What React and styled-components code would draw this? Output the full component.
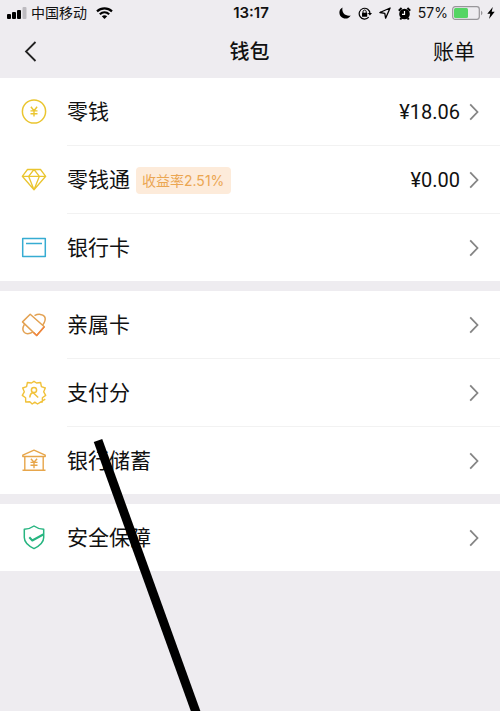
import React from 'react'
import styled, { createGlobalStyle } from 'styled-components'

const GlobalStyle = createGlobalStyle`
  * {
    box-sizing: border-box;
  }

  body {
    margin: 0;
    background: #eeecf0;
    color: #111111;
    font-family: "Liberation Sans", "Noto Sans CJK SC", sans-serif;
  }

  button {
    border: 0;
    padding: 0;
    background: none;
    color: inherit;
    font: inherit;
    cursor: pointer;
  }

  svg {
    display: block;
    flex-shrink: 0;
  }
`

const Page = styled.div`
  position: relative;
  min-height: 100vh;
  overflow: hidden;
`

const StatusBar = styled.header`
  display: grid;
  grid-template-columns: 1fr auto 1fr;
  align-items: center;
  height: 26px;
  padding: 0 5px 0 7px;
  font-size: 14px;
  line-height: 20px;
`

const StatusSide = styled.div`
  display: flex;
  align-items: center;
  justify-content: ${(props) => (props.$end ? 'flex-end' : 'flex-start')};
  gap: ${(props) => (props.$end ? '7px' : '4px')};

  .wifi {
    margin-left: 5px;
  }
`

const Power = styled.div`
  display: flex;
  align-items: center;
  gap: 4px;
  font-family: Inter, sans-serif;
`

const Clock = styled.time`
  font-family: Inter, sans-serif;
  font-size: 15px;
  font-weight: 600;
`

const NavBar = styled.nav`
  display: grid;
  grid-template-columns: 1fr auto 1fr;
  align-items: center;
  height: 52px;
  padding: 0 25px 0 24px;
  font-size: 21px;
  line-height: 30px;
`

const Title = styled.h1`
  margin: 0;
  font-size: 20px;
  font-weight: 500;
`

const NavButton = styled.button`
  justify-self: ${(props) => (props.$end ? 'end' : 'start')};
`

const Group = styled.ul`
  margin: 0 0 10px;
  padding: 0;
  list-style: none;
  background: #ffffff;
`

const Item = styled.li`
  & + &::before {
    content: "";
    display: block;
    height: 1px;
    margin-left: 67px;
    background: #f2f2f2;
  }
`

const Row = styled.button`
  display: flex;
  align-items: center;
  width: 100%;
  height: 67px;
  padding: 1px 21px 0 20px;
  text-align: left;
`

const Label = styled.span`
  margin-left: 19px;
  font-size: 21px;
  line-height: 30px;
`

const Tag = styled.span`
  margin-left: 6px;
  padding: 0 7px 0 6px;
  border-radius: 4px;
  background: #fdebda;
  color: #eba652;
  font-family: Inter, "Noto Sans CJK SC", sans-serif;
  font-size: 14px;
  line-height: 27px;
`

const Trailing = styled.span`
  display: flex;
  align-items: center;
  gap: 9px;
  margin-left: auto;
  font-family: Roboto, sans-serif;
  font-size: 20px;
`

const StrokeIcon = ({ color, children }) => (
  <svg width="28" height="28" viewBox="0 0 28 28" fill="none" stroke={color}
       strokeWidth="1.5" strokeLinejoin="round" aria-hidden="true">
    {children}
  </svg>
)

const CoinIcon = () => (
  <StrokeIcon color="#eac52f">
    <circle cx="14" cy="13.5" r="11.6" />
    <path d="M10.9 8.8 14 12.8l3.1-4M14 12.8v5.8M10.5 12.9h7M10.5 15.7h7" strokeWidth="1.4" />
  </StrokeIcon>
)

const DiamondIcon = () => (
  <StrokeIcon color="#eac52f">
    <path d="M7.5 3.5h13l5.2 6.8L14 23.800 2.300 10.300zM2.300 10.300h23.400M14 3.500l-5.400 6.800L14 23.800l5.400-13.500z" strokeWidth="1.3" />
  </StrokeIcon>
)

const CardIcon = () => (
  <StrokeIcon color="#36acd2">
    <path d="M2.700 4.500h22.600v18H2.700zM6 9.500h16" />
  </StrokeIcon>
)

const FamilyCardIcon = () => (
  <StrokeIcon color="#e3a151">
    <path d="M10.200 3.300 24.300 15.800l-7.600 8.700L2.500 10.900z" />
    <path d="M14.500 4.700c3.700-2.100 8.300-1.600 10 .8 1.500 2.300.6 5.300-1.800 8.600M4.500 13.200c-2 3.500-2.200 6.500-.1 8.300 2 1.600 5 1.400 8.300-.3" />
    <path d="m24.300 15.800-7.600 8.700-3.200-3" stroke="#f0853f" />
  </StrokeIcon>
)

const ScoreIcon = () => (
  <StrokeIcon color="#f1c23b">
    <path d="m20 23.300 2.300-.3.100-4.200 3.300-2.400-2-3.600 1.600-3.800-3.900-1.400-.8-4.100-4.100.5L14 2.300 11.500 4l-4.100-.5-.8 4.100-3.900 1.400 1.600 3.800-2 3.600 3.300 2.400.1 4.200 4.100-.3 2.400 2.300 2.600-1.800 2.700 1.800 2.600-1.700 5.200-3.200" strokeWidth="1.4" />
    <circle cx="14" cy="11" r="2.600" />
    <path d="M9.800 18.500c.1-2.700 1.500-4.400 3.100-5l5.300 5" />
  </StrokeIcon>
)

const BankIcon = () => (
  <StrokeIcon color="#e7a64b">
    <path d="M2.800 9.500v-1.400L14 3.200l11.200 4.900v1.400zM4.800 9.500v13.700M23.200 9.500v13.700M2.500 23.200h23" strokeWidth="1.4" />
    <path d="m10.900 11.800 3.100 3.500 3.100-3.500M14 15.300v5.900M10.500 15.400h7M10.500 18.200h7" strokeWidth="1.4" />
  </StrokeIcon>
)

const ShieldIcon = () => (
  <StrokeIcon color="#27b580">
    <path d="M14 2c3 2.200 6 3.100 9.700 3.300v8.200c0 5-4 8.300-9.700 11.100-5.700-2.800-9.700-6.100-9.700-11.100V5.300C8 5.100 11 4.200 14 2z" />
    <path d="m9.300 13.300 3 3.200L23.200 10.500" strokeWidth="2" />
  </StrokeIcon>
)

const Chevron = () => (
  <svg width="10" height="18" viewBox="0 0 10 18" fill="none" stroke="#858585" strokeWidth="1.8" aria-hidden="true">
    <path d="m1.200 1.300 7.300 7.700-7.300 7.700" />
  </svg>
)

const BackIcon = () => (
  <svg width="13" height="22" viewBox="0 0 13 22" fill="none" stroke="#222222" strokeWidth="1.8" aria-hidden="true">
    <path d="M11.500 1 2 10.500l9.500 9.500" />
  </svg>
)

const SignalIcon = () => (
  <svg width="20" height="12" viewBox="0 0 20 12" aria-hidden="true">
    <rect y="7" width="4" height="5" rx="1" />
    <rect x="5" y="5" width="4" height="7" rx="1" />
    <rect x="10" y="3" width="4" height="9" rx="1" />
    <rect x="15.5" width="4" height="12" rx="1" fill="#bdbbc0" />
  </svg>
)

const WifiIcon = () => (
  <svg className="wifi" width="17" height="12" viewBox="0 0 17 12" fill="none" stroke="#000000" strokeWidth="2.2" aria-hidden="true">
    <path d="M1 4.400c4.400-4 10.600-4 15 0M3.800 7.300c2.800-2.500 6.600-2.500 9.400 0" />
    <path d="M5.800 9.300c1.600-1.400 3.800-1.400 5.400 0L8.500 12z" fill="#000000" stroke="none" />
  </svg>
)

const MoonIcon = () => (
  <svg width="12" height="12" viewBox="0 0 12 12" aria-hidden="true">
    <path d="M3.500.5C1.500 1.500.4 3.300.4 5.500c0 3.400 2.700 6.100 6.100 6.100 2.300 0 4.200-1.200 5.200-3.100C7 9.700 2.300 6 3.500.5z" />
  </svg>
)

const LockIcon = () => (
  <svg width="14" height="13" viewBox="0 0 14 13" fill="none" stroke="#000000" aria-hidden="true">
    <path d="M10.700 10.200A5.400 5.400 0 1 1 12 6.500" strokeWidth="1.200" />
    <path d="M9.800 6h4.200l-2.100 2.600z" fill="#000000" stroke="none" />
    <rect x="4" y="5.700" width="5.200" height="4" rx=".5" fill="#000000" stroke="none" />
    <path d="M5 6V4.700c0-2.200 3.200-2.200 3.200 0V6" />
  </svg>
)

const LocationIcon = () => (
  <svg width="12" height="12" viewBox="0 0 12 12" fill="none" stroke="#000000" strokeWidth="1.300" strokeLinejoin="round" aria-hidden="true">
    <path d="M11.100 1 .9 5.500l4.900.8.800 4.900z" />
  </svg>
)

const AlarmIcon = () => (
  <svg width="13" height="13" viewBox="0 0 13 13" aria-hidden="true">
    <circle cx="6.500" cy="7" r="5.300" />
    <path d="M.8 3.700 3.600 1M12.200 3.700 9.400 1M3.300 11l-1 1.500M9.700 11l1 1.500" stroke="#000000" strokeWidth="2" />
    <path d="M6.500 4v3.300H4" fill="none" stroke="#ffffff" strokeWidth="1.200" />
  </svg>
)

const BatteryIcon = () => (
  <svg width="31" height="14" viewBox="0 0 31 14" aria-hidden="true">
    <rect x=".7" y=".7" width="26.600" height="12.600" rx="2.500" fill="none" stroke="#98969a" strokeWidth="1.200" />
    <rect x="2" y="2" width="14" height="10" rx="1.500" fill="#54d564" />
    <path d="M29 4.800c2 .8 2 3.600 0 4.400z" fill="#98969a" />
  </svg>
)

const BoltIcon = () => (
  <svg width="8" height="12" viewBox="0 0 8 12" aria-hidden="true">
    <path d="M5.800 0 .3 6.800h3L2 12l5.700-7.200h-3z" />
  </svg>
)

// hand-drawn stroke running over the list
const Marker = styled.svg`
  position: absolute;
  top: 438px;
  left: 92px;
  pointer-events: none;
`

const groups = [
  [
    { label: '零钱', icon: CoinIcon, amount: '¥18.06' },
    { label: '零钱通', icon: DiamondIcon, tag: '收益率2.51%', amount: '¥0.00' },
    { label: '银行卡', icon: CardIcon },
  ],
  [
    { label: '亲属卡', icon: FamilyCardIcon },
    { label: '支付分', icon: ScoreIcon },
    { label: '银行储蓄', icon: BankIcon },
  ],
  [{ label: '安全保障', icon: ShieldIcon }],
]

export default function App() {
  return (
    <Page>
      <GlobalStyle />
      <StatusBar>
        <StatusSide>
          <SignalIcon />
          <span>中国移动</span>
          <WifiIcon />
        </StatusSide>
        <Clock>13:17</Clock>
        <StatusSide $end>
          <MoonIcon />
          <LockIcon />
          <LocationIcon />
          <AlarmIcon />
          <Power>
            <span>57%</span>
            <BatteryIcon />
            <BoltIcon />
          </Power>
        </StatusSide>
      </StatusBar>
      <NavBar>
        <NavButton aria-label="返回"><BackIcon /></NavButton>
        <Title>钱包</Title>
        <NavButton $end>账单</NavButton>
      </NavBar>
      <main>
        {groups.map((items, index) => (
          <Group key={index}>
            {items.map(({ label, icon: Icon, tag, amount }) => (
              <Item key={label}>
                <Row>
                  <Icon />
                  <Label>{label}</Label>
                  {tag && <Tag>{tag}</Tag>}
                  <Trailing>
                    {amount}
                    <Chevron />
                  </Trailing>
                </Row>
              </Item>
            ))}
          </Group>
        ))}
      </main>
      <Marker width="120" height="290" viewBox="0 0 120 290" aria-hidden="true">
        <path d="M6 2.500 109 288" stroke="#000000" strokeWidth="9" />
      </Marker>
    </Page>
  )
}
